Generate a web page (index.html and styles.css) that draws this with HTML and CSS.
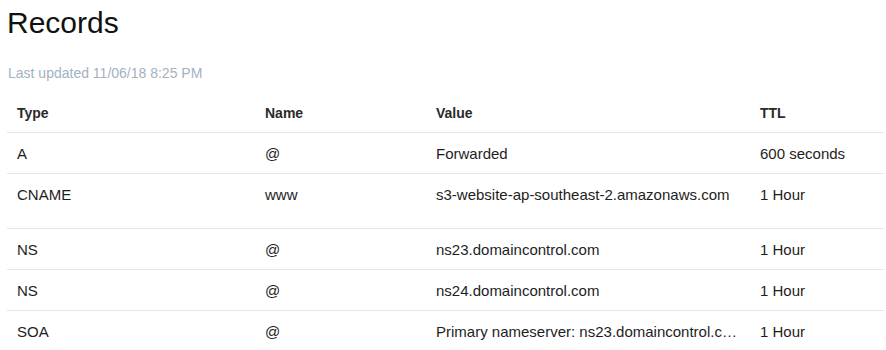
FILE: index.html
```html
<!DOCTYPE html>
<html lang="en">
<head>
    <meta charset="UTF-8">
    <title>Records</title>
    <link rel="stylesheet" href="styles.css">
</head>
<body>
    <div class="records">
        <h1>Records</h1>
        <p class="updated">Last updated 11/06/18 8:25 PM</p>

        <table class="dns-table">
            <thead>
                <tr>
                    <th class="col-type">Type</th>
                    <th class="col-name">Name</th>
                    <th class="col-value">Value</th>
                    <th class="col-ttl">TTL</th>
                </tr>
            </thead>
            <tbody>
                <tr>
                    <td>A</td>
                    <td>@</td>
                    <td class="value">Forwarded</td>
                    <td>600 seconds</td>
                </tr>
                <tr class="tall">
                    <td>CNAME</td>
                    <td>www</td>
                    <td class="value">s3-website-ap-southeast-2.amazonaws.com</td>
                    <td>1 Hour</td>
                </tr>
                <tr>
                    <td>NS</td>
                    <td>@</td>
                    <td class="value">ns23.domaincontrol.com</td>
                    <td>1 Hour</td>
                </tr>
                <tr>
                    <td>NS</td>
                    <td>@</td>
                    <td class="value">ns24.domaincontrol.com</td>
                    <td>1 Hour</td>
                </tr>
                <tr>
                    <td>SOA</td>
                    <td>@</td>
                    <td class="value">Primary nameserver: ns23.domaincontrol.com.</td>
                    <td>1 Hour</td>
                </tr>
            </tbody>
        </table>
    </div>
</body>
</html>
```

FILE: styles.css
```css
body {
    font-family: "Liberation Sans", Arial, sans-serif;
    color: #111;
    margin: 0;
    padding: 0;
    background: #fff;
    overflow: hidden;
}

.records {
    padding: 0 2px 0 7px;
}

h1 {
    font-size: 30px;
    font-weight: 400;
    margin: 0;
    padding-top: 6px;
    line-height: 34px;
    color: #111;
}

.updated {
    font-size: 14px;
    color: #a3b2c2;
    margin: 24px 0 0 1px;
    line-height: 18px;
}

.dns-table {
    width: 100%;
    border-collapse: collapse;
    margin-top: 10px;
    font-size: 15px;
    table-layout: fixed;
}

.dns-table th,
.dns-table td {
    text-align: left;
    vertical-align: top;
    padding: 13px 10px 0;
    height: 27px;
    line-height: 16px;
    white-space: nowrap;
}

.dns-table th {
    font-size: 14px;
    font-weight: bold;
    color: #2a2a2a;
}

.dns-table td {
    color: #1e1e1e;
    border-top: 1px solid #e6e6e6;
}

.dns-table td.value {
    overflow: hidden;
    text-overflow: ellipsis;
}

.dns-table tr.tall td {
    height: 41px;
}

.col-type { width: 228px; }
.col-name { width: 151px; }
.col-value { width: 304px; }
```
